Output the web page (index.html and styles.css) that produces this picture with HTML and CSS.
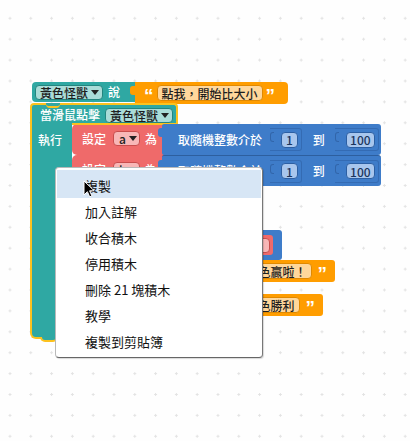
FILE: index.html
```html
<!DOCTYPE html>
<html lang="zh-Hant">

<head>
    <meta charset="UTF-8">
    <meta name="viewport" content="width=device-width, initial-scale=1.0">
    <title>積木工作區</title>
    <link rel="stylesheet" href="styles.css">
</head>

<body>
    <div class="workspace">
        <svg class="grid" width="410" height="441">
            <defs>
                <pattern id="dots" width="20.8" height="20.9" patternUnits="userSpaceOnUse" x="8.5" y="16.8">
                    <path d="M0 1.5h3M1.5 0v3" stroke="#e3e3e3" stroke-width="1" />
                </pattern>
            </defs>
            <rect width="410" height="441" fill="url(#dots)" />
        </svg>

        <!-- 說 block -->
        <div class="stack say-stack">
            <div class="block teal say">
                <span class="pill pill-teal">黃色怪獸 <i class="caret"></i></span>
                <span class="label">說</span>
            </div>
            <div class="block orange text-block">
                <span class="quote">“</span>
                <span class="pill pill-orange">點我，開始比大小</span>
                <span class="quote">”</span>
            </div>
        </div>

        <!-- blocks under the menu -->
        <div class="block blue cmp">
            <div class="block red var"><span class="pill pill-red">b</span></div>
        </div>
        <div class="block orange text-block win1">
            <span class="pill pill-orange">黃色贏啦！</span>
            <span class="quote">”</span>
        </div>
        <div class="block orange text-block win2">
            <span class="pill pill-orange">紅色勝利</span>
            <span class="quote">”</span>
        </div>

        <!-- event block, selected -->
        <div class="stack event">
            <div class="hat teal">
                <span class="label">當滑鼠點擊</span>
                <span class="pill pill-teal">黃色怪獸 <i class="caret"></i></span>
            </div>
            <div class="body">
                <div class="arm teal"><span class="label">執行</span></div>
                <div class="stmts">
                    <div class="set-row">
                        <div class="block red set">
                            <span class="label">設定</span>
                            <span class="pill pill-red">a <i class="caret"></i></span>
                            <span class="label">為</span>
                        </div>
                        <div class="block blue rand">
                            <span class="label">取隨機整數介於</span>
                            <span class="socket"><span class="pill pill-blue">1</span></span>
                            <span class="label">到</span>
                            <span class="socket"><span class="pill pill-blue">100</span></span>
                        </div>
                    </div>
                    <div class="set-row">
                        <div class="block red set">
                            <span class="label">設定</span>
                            <span class="pill pill-red">b <i class="caret"></i></span>
                            <span class="label">為</span>
                        </div>
                        <div class="block blue rand seam">
                            <span class="label">取隨機整數介於</span>
                            <span class="socket"><span class="pill pill-blue">1</span></span>
                            <span class="label">到</span>
                            <span class="socket"><span class="pill pill-blue">100</span></span>
                        </div>
                    </div>
                </div>
            </div>
            <div class="foot teal"></div>
        </div>

        <!-- context menu -->
        <ul class="menu">
            <li class="active">複製</li>
            <li>加入註解</li>
            <li>收合積木</li>
            <li>停用積木</li>
            <li>刪除 21 塊積木</li>
            <li>教學</li>
            <li>複製到剪貼簿</li>
        </ul>

        <svg class="cursor" width="12" height="18" viewBox="0 0 12 18">
            <path d="M1 1v14l3.4-3.3 2.3 5.2 2.2-1-2.3-5.1h4.6z" fill="#000" stroke="#fff" stroke-width="1" />
        </svg>
    </div>
</body>

</html>
```

FILE: styles.css
```css
body {
    margin: 0;
    font-family: "Noto Sans CJK TC", "Noto Sans", sans-serif;
    background: #fff;
}

.workspace {
    position: relative;
    width: 410px;
    height: 441px;
    overflow: hidden;
    background: #fefefe;
}

.grid {
    position: absolute;
    left: 0;
    top: 0;
}

.stack {
    position: absolute;
}

.teal {
    background: #2fa8a3;
}

.orange {
    background: #ff9d00;
}

.red {
    background: #ef6a6a;
}

.blue {
    background: #3e7cc9;
}

.block {
    display: flex;
    align-items: center;
    box-sizing: border-box;
    color: #fff;
    font-size: 12px;
}

.label {
    color: #fff;
    font-size: 12px;
    font-weight: 500;
    line-height: 14px;
    white-space: nowrap;
}

.pill {
    display: inline-flex;
    align-items: center;
    box-sizing: border-box;
    height: 15px;
    padding: 0 4px;
    border-radius: 4px;
    font-size: 12px;
    font-weight: 500;
    line-height: 13px;
    color: #1e1e1e;
    white-space: nowrap;
}

.pill-teal {
    background: #a9dcd8;
    border: 1px solid #23857f;
}

.pill-orange {
    background: #ffd79b;
    border: 1px solid #e08900;
    height: 16px;
}

.pill-red {
    background: #f8b7b7;
    border: 1px solid #c94d4d;
}

.pill-blue {
    background: #a8c6ed;
    border: 1px solid #2c5fa3;
    color: #1b355c;
    justify-content: center;
}

.caret {
    display: inline-block;
    width: 0;
    height: 0;
    margin-left: 3px;
    border-left: 4px solid transparent;
    border-right: 4px solid transparent;
    border-top: 5px solid #222;
}

.quote {
    font-family: "Liberation Sans", sans-serif;
    font-weight: bold;
    font-size: 19px;
    line-height: 14px;
    color: #fff;
    padding-top: 6px;
}

/* 說 */
.say-stack {
    left: 32px;
    top: 82px;
    display: flex;
    align-items: flex-start;
}

.say {
    width: 103px;
    height: 20px;
    padding-left: 3px;
    gap: 5px;
    border-radius: 4px 0 0 4px;
}

.say .pill {
    width: 68px;
}

.text-block {
    height: 22px;
    padding: 0 10px 0 9px;
    gap: 3px;
    border-radius: 0 4px 4px 0;
}

.say-stack .text-block {
    width: 153px;
    position: relative;
}

.say-stack .text-block::before {
    content: "";
    position: absolute;
    left: -5px;
    top: 4px;
    width: 5px;
    height: 9px;
    border-radius: 3px 0 0 3px;
    background: #ff9d00;
}

.say-stack .text-block .pill {
    width: 106px;
    justify-content: center;
}

/* event block */
.event {
    left: 30px;
    top: 103px;
}

.hat {
    position: relative;
    display: flex;
    align-items: center;
    gap: 5px;
    width: 148px;
    height: 20px;
    box-sizing: border-box;
    padding: 2px 0 0 8px;
    border: 2px solid #fcc21e;
    border-bottom: none;
    border-radius: 4px 4px 0 0;
}

.hat .pill {
    width: 68px;
}

.hat::after {
    content: "";
    position: absolute;
    left: 40px;
    right: -2px;
    bottom: -2px;
    height: 2px;
    background: #fcc21e;
}

.hat::before {
    content: "";
    position: absolute;
    left: 14px;
    top: -2px;
    width: 14px;
    height: 3px;
    border-bottom: 2px solid #fcc21e;
    border-radius: 0 0 4px 4px;
    background: #2fa8a3;
}

.body {
    display: flex;
}

.arm {
    width: 42px;
    height: 202px;
    box-sizing: border-box;
    border-left: 2px solid #fcc21e;
    padding: 3px 0 0 6px;
}

.stmts {
    display: flex;
    flex-direction: column;
    padding-top: 1px;
}

.set-row {
    display: flex;
    height: 31px;
}

.set {
    width: 96px;
    gap: 5px;
    padding: 0 0 2px 10px;
    border-radius: 5px 0 0 5px;
}

.set .pill {
    width: 27px;
    margin-left: 2px;
    padding-left: 5px;
}

.rand {
    position: relative;
    width: 219px;
    margin-left: -6px;
    padding-left: 16px;
    border-radius: 2px 3px 3px 2px;
}

.rand::before {
    content: "";
    position: absolute;
    left: -4px;
    top: 4px;
    width: 4px;
    height: 9px;
    border-radius: 3px 0 0 3px;
    background: #3e7cc9;
}

.seam {
    border-top: 1px solid #2d5f9f;
}

.rand .label:first-child {
    margin-right: 8px;
}

.rand .label {
    margin-right: 10px;
}

.socket {
    position: relative;
    display: inline-flex;
    align-items: center;
    height: 21px;
    padding: 0 3px 0 11px;
    border: 1px solid rgba(20, 50, 100, 0.22);
    border-left: none;
    border-radius: 0 3px 3px 0;
    margin-right: 11px;
}

.socket::before {
    content: "";
    position: absolute;
    left: 0;
    top: 3px;
    width: 3px;
    height: 8px;
    border: 1px solid rgba(20, 50, 100, 0.3);
    border-right: none;
    border-radius: 3px 0 0 3px;
}

.socket .pill {
    min-width: 15px;
    height: 16px;
}

.socket:last-child .pill {
    width: 29px;
}

.foot {
    position: relative;
    width: 130px;
    height: 12px;
    box-sizing: content-box;
    border-left: 2px solid #fcc21e;
    border-bottom: 2px solid #fcc21e;
    border-radius: 0 0 0 6px;
}

.foot::after {
    content: "";
    position: absolute;
    left: 8px;
    bottom: -5px;
    width: 14px;
    height: 3px;
    background: #2fa8a3;
    border: 2px solid #fcc21e;
    border-top: none;
    border-radius: 0 0 5px 5px;
}

/* pieces peeking out under the menu */
.cmp {
    position: absolute;
    right: 128px;
    top: 230px;
    width: 80px;
    height: 30px;
    justify-content: flex-end;
    padding-right: 9px;
    border-radius: 3px;
}

.var {
    height: 20px;
    padding: 0 3px;
    border-radius: 3px;
}

.var .pill {
    width: 30px;
}

.win1,
.win2 {
    position: absolute;
    justify-content: flex-end;
    padding-right: 8px;
    gap: 6px;
    border-radius: 3px;
}

.win1 {
    right: 75px;
    top: 260px;
    width: 130px;
}

.win2 {
    right: 87px;
    top: 294px;
    width: 120px;
}

/* context menu */
.menu {
    position: absolute;
    left: 55px;
    top: 167px;
    width: 208px;
    height: 191px;
    box-sizing: border-box;
    margin: 0;
    padding: 2px 1px 0;
    list-style: none;
    background: #fff;
    border: 1px solid #b9b9b9;
    border-right-color: #777;
    border-bottom-color: #666;
    border-radius: 4px;
    box-shadow: 1px 1px 1px rgba(0, 0, 0, 0.15);
}

.menu li {
    height: 26px;
    padding: 5px 0 0 28px;
    box-sizing: border-box;
    font-size: 13px;
    line-height: 18px;
    color: #111;
}

.menu li.active {
    background: #d7e6f5;
    height: 28px;
    padding-top: 7px;
}

.cursor {
    position: absolute;
    left: 83px;
    top: 180px;
}
```
